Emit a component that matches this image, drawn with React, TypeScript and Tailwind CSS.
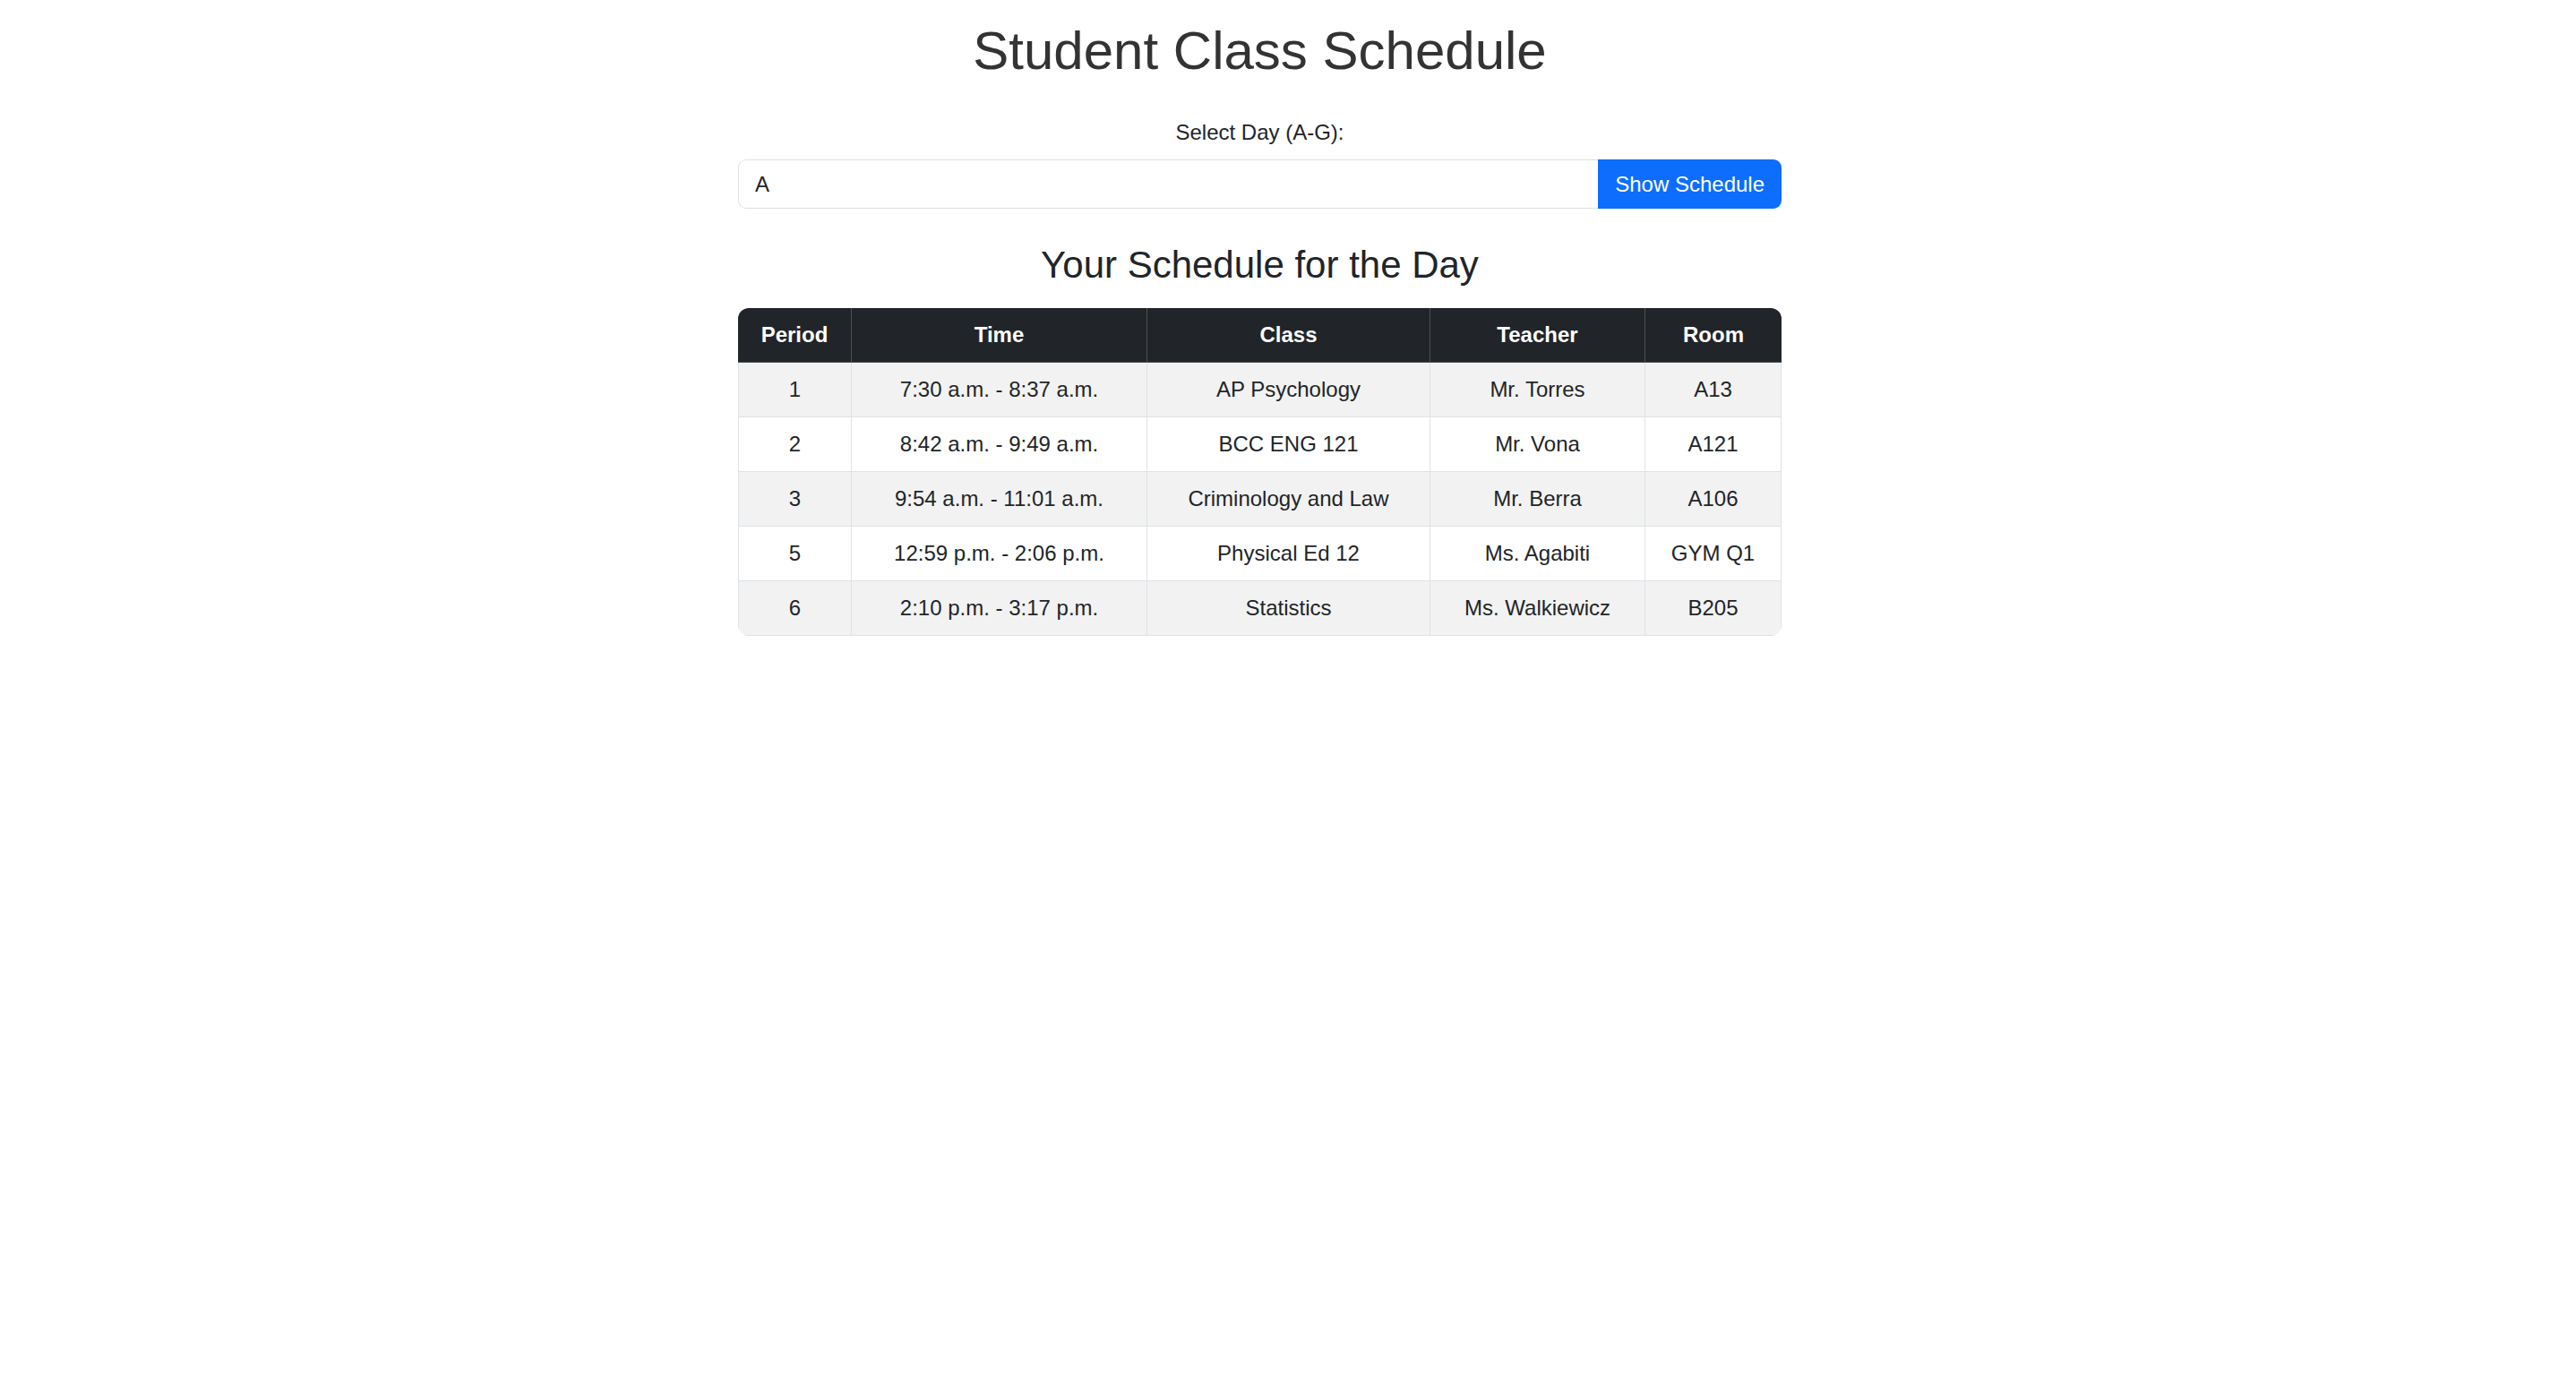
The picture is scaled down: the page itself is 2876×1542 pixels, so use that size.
export default function App() {
  const rows = [
    { period: "1", time: "7:30 a.m. - 8:37 a.m.", cls: "AP Psychology", teacher: "Mr. Torres", room: "A13" },
    { period: "2", time: "8:42 a.m. - 9:49 a.m.", cls: "BCC ENG 121", teacher: "Mr. Vona", room: "A121" },
    { period: "3", time: "9:54 a.m. - 11:01 a.m.", cls: "Criminology and Law", teacher: "Mr. Berra", room: "A106" },
    { period: "5", time: "12:59 p.m. - 2:06 p.m.", cls: "Physical Ed 12", teacher: "Ms. Agabiti", room: "GYM Q1" },
    { period: "6", time: "2:10 p.m. - 3:17 p.m.", cls: "Statistics", teacher: "Ms. Walkiewicz", room: "B205" },
  ];
  const heads = ["Period", "Time", "Class", "Teacher", "Room"];

  return (
    <div className="min-h-screen bg-white pr-[63px] font-['Liberation_Sans',Arial,sans-serif] text-[#212529]">
      <div className="mx-auto w-[1165px] pt-[21px]">
        <h1 className="text-center text-[60px] leading-[72px] text-[#333]">Student Class Schedule</h1>

        <label className="mt-[37px] block text-center text-[24px] leading-[36px]">Select Day (A-G):</label>

        <div className="mt-[12px] flex h-[55px]">
          <input
            defaultValue="A"
            className="flex-1 rounded-l-[9px] border border-r-0 border-[#dee2e6] px-[18px] text-[24px] text-[#212529] outline-none"
          />
          <button className="rounded-r-[9px] bg-[#0d6efd] px-[19px] text-[24px] text-white">Show Schedule</button>
        </div>

        <h2 className="mt-[38px] text-center text-[42px] leading-[50px]">Your Schedule for the Day</h2>

        <div className="mt-[23px] overflow-hidden rounded-[12px]">
          <table className="w-full table-fixed border-separate border-spacing-0 text-center text-[24px]">
            <colgroup>
              <col className="w-[127px]" />
              <col className="w-[330px]" />
              <col className="w-[316px]" />
              <col className="w-[240px]" />
              <col className="w-[152px]" />
            </colgroup>
            <thead>
              <tr className="bg-[#212529] text-white">
                {heads.map((h, i) => (
                  <th
                    key={h}
                    className={`h-[61px] border-b border-[#4d5154] font-bold ${i < 4 ? "border-r" : ""}`}
                  >
                    {h}
                  </th>
                ))}
              </tr>
            </thead>
            <tbody>
              {rows.map((r, ri) => {
                const cells = [r.period, r.time, r.cls, r.teacher, r.room];
                return (
                  <tr key={ri} className={ri % 2 === 0 ? "bg-[#f2f2f2]" : "bg-white"}>
                    {cells.map((c, ci) => (
                      <td
                        key={ci}
                        className={`h-[61px] border-b border-[#dee2e6] ${ci === 0 ? "border-l" : ""} border-r`}
                      >
                        {c}
                      </td>
                    ))}
                  </tr>
                );
              })}
            </tbody>
          </table>
        </div>
      </div>
    </div>
  );
}
